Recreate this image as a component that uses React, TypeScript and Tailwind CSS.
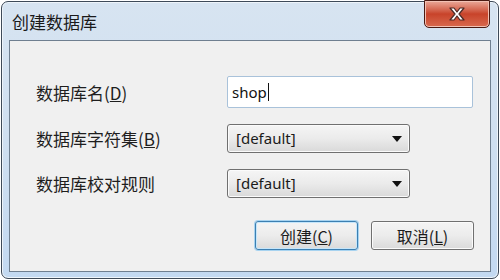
import React from "react";

const cjk = { fontFamily: '"Noto Sans CJK SC", "Noto Sans", sans-serif' };
const latin = { fontFamily: '"Noto Sans", "Noto Sans CJK SC", sans-serif' };

function Arrow() {
  return (
    <svg width="10" height="6" viewBox="0 0 10 6" className="shrink-0">
      <path d="M0 0 H10 L5 6 Z" fill="#111" />
    </svg>
  );
}

function Select() {
  return (
    <div className="h-[29px] w-[183px] rounded-[3px] border border-[#707070] bg-gradient-to-b from-[#f5f5f5] via-[#ebebeb] to-[#d9d9d9] flex items-center justify-between pl-[8px] pr-[7px] shadow-[inset_0_0_0_1px_#fbfbfb]">
      <span className="text-[15px] text-[#1b1b1b] leading-none" style={latin}>
        [default]
      </span>
      <Arrow />
    </div>
  );
}

export default function App() {
  return (
    <div className="w-[500px] h-[280px] bg-white p-[1px]">
      <div className="w-full h-full rounded-[7px] border border-[#3e4a58] bg-gradient-to-b from-[#d7e4f1] via-[#cfdff0] to-[#c3d9f1] flex flex-col shadow-[inset_0_0_0_1px_#eef4fa]">
        <div className="h-[38px] flex items-start justify-between pl-[10px] pr-[8px] shrink-0">
          <span className="mt-[9px] text-[17px] leading-[22px] text-[#1a1a1a]" style={cjk}>
            创建数据库
          </span>
          <div className="-mt-[2px] w-[66px] h-[28px] rounded-b-[5px] border border-[#4b1a12] bg-gradient-to-b from-[#e9a899] via-[#c8432a] to-[#d8694e] flex items-center justify-center shadow-[inset_0_0_0_1px_#f2c1b4]">
            <svg width="20" height="16" viewBox="0 0 20 16">
              <path
                d="M3 2 L7 2 L10 6 L13 2 L17 2 L12 8 L17 14 L13 14 L10 10 L7 14 L3 14 L8 8 Z"
                fill="#ffffff"
                stroke="#4a2a26"
                strokeWidth="1.2"
                strokeLinejoin="round"
              />
            </svg>
          </div>
        </div>
        <div className="mx-[7px] mb-[6px] flex-1 border border-[#6f7f90] bg-[#f0f0f0] flex flex-col pt-[35px] pl-[26px] pr-[16px]">
          <div className="grid grid-cols-[191px_1fr] items-center gap-y-[16px]">
            <span className="text-[17px] text-[#1e1e1e] leading-none" style={cjk}>
              数据库名(<span className="underline">D</span>)
            </span>
            <div className="h-[32px] w-[246px] rounded-[2px] border border-[#a9c2da] bg-white flex items-center pl-[4px]">
              <span className="text-[15px] text-[#111] leading-none" style={latin}>
                shop
              </span>
              <span className="ml-[1px] w-[1px] h-[18px] bg-[#111]" />
            </div>
            <span className="text-[17px] text-[#1e1e1e] leading-none" style={cjk}>
              数据库字符集(<span className="underline">B</span>)
            </span>
            <Select />
            <span className="text-[17px] text-[#1e1e1e] leading-none" style={cjk}>
              数据库校对规则
            </span>
            <Select />
          </div>
          <div className="mt-[23px] flex justify-end gap-[13px]">
            <div className="h-[29px] w-[103px] rounded-[3px] border border-[#3c7fb1] bg-gradient-to-b from-[#f4f4f4] via-[#ececec] to-[#dadada] flex items-center justify-center shadow-[0_0_0_1px_#a7d3f0,inset_0_0_0_1px_#c5e6fb]">
              <span className="text-[16px] text-[#1b1b1b] leading-none" style={cjk}>
                创建(<span className="underline">C</span>)
              </span>
            </div>
            <div className="h-[29px] w-[103px] rounded-[3px] border border-[#707070] bg-gradient-to-b from-[#f4f4f4] via-[#ececec] to-[#dadada] flex items-center justify-center shadow-[inset_0_0_0_1px_#fbfbfb]">
              <span className="text-[16px] text-[#1b1b1b] leading-none" style={cjk}>
                取消(<span className="underline">L</span>)
              </span>
            </div>
          </div>
        </div>
      </div>
    </div>
  );
}
